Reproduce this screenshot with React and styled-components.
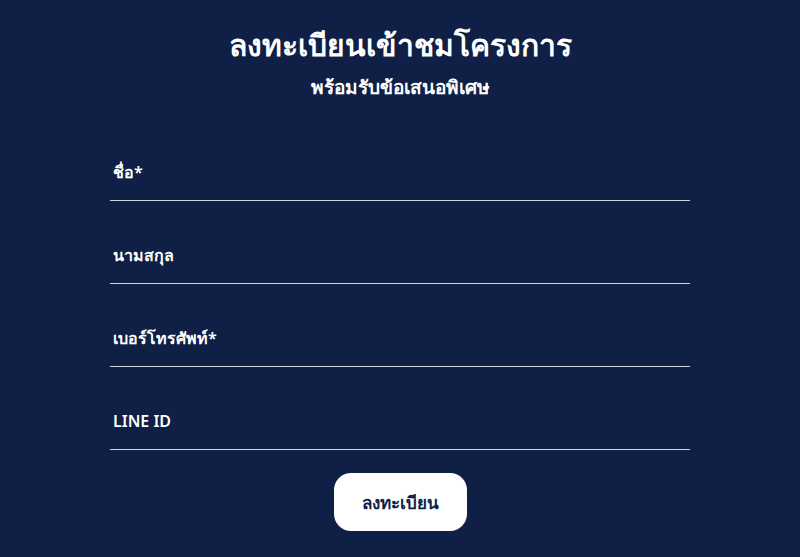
import React from "react";
import styled, { createGlobalStyle } from "styled-components";

const GlobalStyle = createGlobalStyle`
  html, body {
    margin: 0;
    padding: 0;
    background: #101f45;
  }
  body {
    font-family: "Noto Sans", "DejaVu Sans", sans-serif;
  }
`;

const Page = styled.div`
  width: 800px;
  height: 557px;
  background: #101f45;
  color: #ffffff;
  display: flex;
  flex-direction: column;
  align-items: center;
  padding-top: 24px;
  box-sizing: border-box;
  overflow: hidden;
`;

const Title = styled.h1`
  margin: 0;
  font-size: 30px;
  font-weight: 600;
  line-height: 42px;
  text-align: center;
`;

const Subtitle = styled.h2`
  margin: 0;
  font-size: 19px;
  font-weight: 600;
  line-height: 26px;
  margin-top: 8px;
  text-align: center;
`;

const Form = styled.form`
  width: 580px;
  display: flex;
  flex-direction: column;
  margin-top: 18px;
`;

const Field = styled.label`
  display: flex;
  align-items: flex-end;
  height: 83px;
  padding: 0 0 16px 3px;
  box-sizing: border-box;
  border-bottom: 1px solid #cfd3dd;
`;

const Input = styled.input`
  flex: 1;
  background: transparent;
  border: none;
  outline: none;
  color: #ffffff;
  font-family: inherit;
  font-size: 16px;
  font-weight: 600;
  padding: 0;
  line-height: 24px;
  &::placeholder {
    color: #ffffff;
    opacity: 1;
  }
`;

const Submit = styled.button`
  align-self: center;
  margin-top: 23px;
  width: 133px;
  height: 58px;
  border: none;
  border-radius: 17px;
  background: #ffffff;
  color: #101f45;
  font-family: inherit;
  font-size: 17px;
  font-weight: 700;
  cursor: pointer;
`;

const fields = ["ชื่อ*", "นามสกุล", "เบอร์โทรศัพท์*", "LINE ID"];

const App = () => {
  return (
    <>
      <GlobalStyle />
      <Page>
        <Title>ลงทะเบียนเข้าชมโครงการ</Title>
        <Subtitle>พร้อมรับข้อเสนอพิเศษ</Subtitle>
        <Form onSubmit={e => e.preventDefault()}>
          {fields.map(f => (
            <Field key={f}>
              <Input placeholder={f} />
            </Field>
          ))}
          <Submit type="submit">ลงทะเบียน</Submit>
        </Form>
      </Page>
    </>
  );
};

export default App;
